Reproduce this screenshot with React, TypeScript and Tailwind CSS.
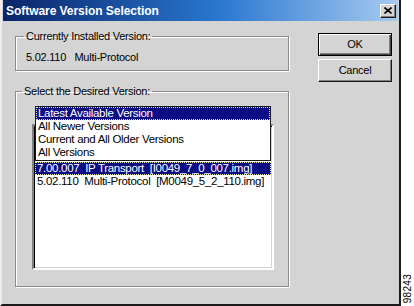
import { useState } from 'react';

const dropdownItems = [
    'Latest Available Version',
    'All Newer Versions',
    'Current and All Older Versions',
    'All Versions',
];

const images = [
    { version: '7.00.007', name: 'IP Transport', file: '[I0049_7_0_007.img]' },
    { version: '5.02.110', name: 'Multi-Protocol', file: '[M0049_5_2_110.img]' },
];

export default function App() {
    const [choice, setChoice] = useState(0);
    const [selected, setSelected] = useState(0);

    return (
        <div className="flex w-[414px] h-[306px] bg-white font-['Liberation_Sans',Arial,sans-serif] text-black overflow-hidden">
            {/* dialog window */}
            <div className="flex flex-col w-[401px] h-[306px] shrink-0 bg-[#d4d4d4] border-l-[2px] border-l-[#ececec] border-r-[2px] border-r-[#1a1a1a] border-b-[2px] border-b-[#1a1a1a] px-[1px]">
                {/* title bar */}
                <div className="flex items-center justify-between h-[21px] shrink-0 pl-[3px] pr-[2px] bg-[linear-gradient(to_right,#0a246a,#2a78d0_55%,#a6caf0)]">
                    <span className="text-white text-[12px] font-bold leading-none tracking-[-0.05px]">Software Version Selection</span>
                    <button className="flex items-center justify-center w-[16px] h-[14px] bg-[#d4d4d4] border border-t-white border-l-white border-r-[#1a1a1a] border-b-[#1a1a1a] shadow-[inset_-1px_-1px_0_#808080]">
                        <svg width="8" height="7" viewBox="0 0 8 7">
                            <path d="M0.5 0.5 L7.5 6.5 M7.5 0.5 L0.5 6.5" stroke="#000" strokeWidth="1.6" />
                        </svg>
                    </button>
                </div>

                {/* body */}
                <div className="flex items-start pt-[9px] text-[11px] tracking-[-0.25px]">
                    <div className="flex flex-col w-[274px] ml-[12px]">
                        <fieldset className="border border-[#8c8c8c] shadow-[inset_1px_1px_0_#fff,1px_1px_0_#fff] h-[41px] px-[10px]">
                            <legend className="ml-[-2px] px-[2px] leading-[13px]">Currently Installed Version:</legend>
                            <div className="pt-[8px] leading-[13px] whitespace-pre">5.02.110   Multi-Protocol</div>
                        </fieldset>

                        <fieldset className="mt-[14px] border border-[#8c8c8c] shadow-[inset_1px_1px_0_#fff,1px_1px_0_#fff] h-[202px]">
                            <legend className="ml-[6px] px-[2px] leading-[13px]">Select the Desired Version:</legend>
                            <div className="relative ml-[16px] mt-[26px] w-[242px] h-[146px]">
                                {/* image list */}
                                <div className="w-full h-full bg-white border-2 border-t-[#808080] border-l-[#808080] border-r-white border-b-white shadow-[inset_1px_1px_0_#000,inset_-1px_-1px_0_#d4d4d4] pt-[36px] px-[1px] text-[11.5px] tracking-[-0.3px]">
                                    {images.map((img, i) => (
                                        <div
                                            key={img.file}
                                            onClick={() => setSelected(i)}
                                            className={
                                                i === selected
                                                    ? 'h-[13px] leading-[11px] pl-[1px] whitespace-pre bg-[#0c0c84] text-white border border-dotted border-[#e6e6a0]'
                                                    : 'h-[13px] leading-[11px] pl-[1px] whitespace-pre border border-transparent'
                                            }
                                        >
                                            {`${img.version}  ${img.name}  ${img.file}`}
                                        </div>
                                    ))}
                                </div>

                                {/* open version dropdown */}
                                <div className="absolute left-[3px] top-[-18px] w-[236px] h-[55px] bg-white border border-[#1a1a1a] text-[11.5px] tracking-[-0.3px]">
                                    {dropdownItems.map((item, i) => (
                                        <div
                                            key={item}
                                            onClick={() => setChoice(i)}
                                            className={
                                                i === choice
                                                    ? 'h-[13px] leading-[11px] pl-[1px] bg-[#0c0c84] text-white border border-dotted border-[#e6e6a0]'
                                                    : 'h-[13px] leading-[11px] pl-[1px] border border-transparent'
                                            }
                                        >
                                            {item}
                                        </div>
                                    ))}
                                </div>
                            </div>
                        </fieldset>
                    </div>

                    {/* buttons */}
                    <div className="flex flex-col gap-[3px] w-[74px] ml-[29px] mt-[3px]">
                        <button className="h-[23px] border border-black bg-[#d4d4d4] shadow-[inset_1px_1px_0_#fff,inset_-1px_-1px_0_#404040,inset_-2px_-2px_0_#808080] leading-none">
                            OK
                        </button>
                        <button className="h-[23px] bg-[#d4d4d4] border border-t-white border-l-white border-r-[#1a1a1a] border-b-[#1a1a1a] shadow-[inset_-1px_-1px_0_#808080] leading-none">
                            Cancel
                        </button>
                    </div>
                </div>
            </div>

            {/* figure number strip */}
            <div className="flex flex-col justify-end items-center flex-1 pb-[3px]">
                <span className="[writing-mode:vertical-rl] rotate-180 text-[10px] leading-none tracking-[0.3px]">98243</span>
            </div>
        </div>
    );
}
